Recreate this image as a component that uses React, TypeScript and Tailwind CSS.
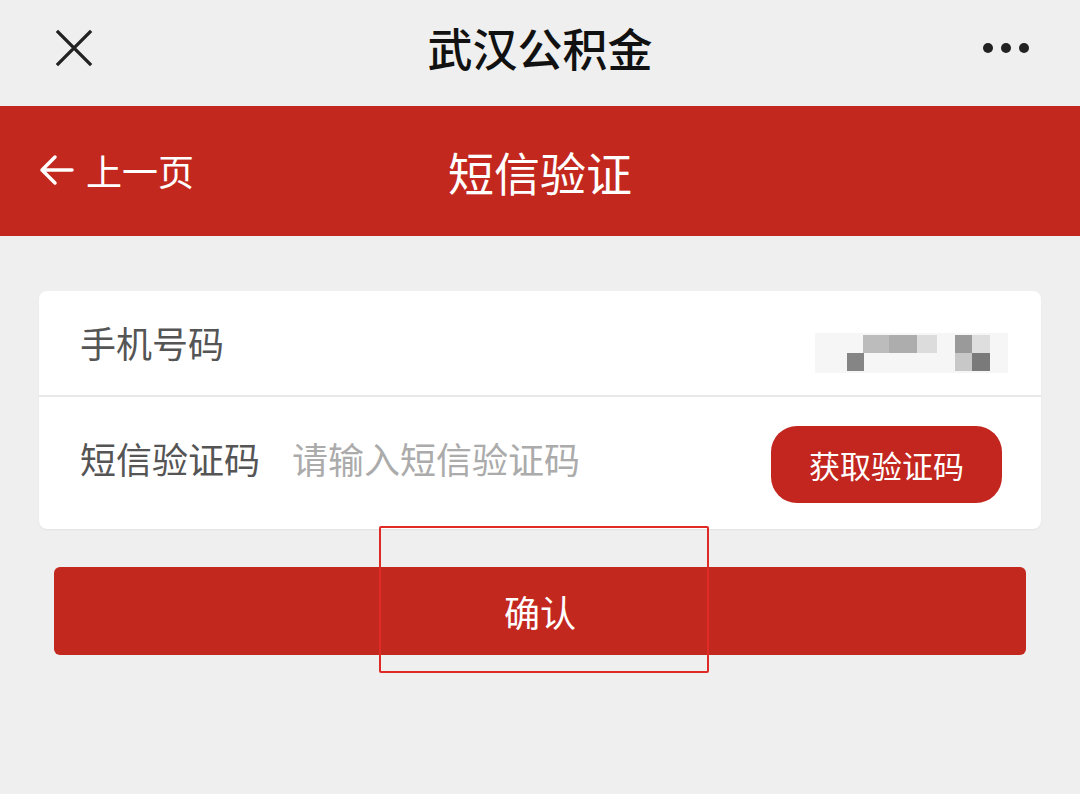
import React from "react";

export default function App() {
  return (
    <div
      className="relative w-[1080px] h-[794px] overflow-hidden bg-[#efefef]"
      style={{ fontFamily: '"Noto Sans CJK SC", "Noto Sans", sans-serif' }}
    >
      {/* top bar */}
      <div className="relative h-[106px] flex items-center justify-center">
        <svg width="38" height="38" viewBox="0 0 40 40" className="absolute left-[55px] top-[29px]">
          <path d="M2 2 L38 38 M38 2 L2 38" stroke="#222" strokeWidth="3.5" fill="none" />
        </svg>
        <div className="text-[45px] font-medium text-[#111] leading-none mb-[12px]">武汉公积金</div>
        <svg width="48" height="12" viewBox="0 0 48 12" className="absolute right-[50px] top-[42px]">
          <circle cx="6" cy="6" r="5" fill="#222" />
          <circle cx="24" cy="6" r="5" fill="#222" />
          <circle cx="42" cy="6" r="5" fill="#222" />
        </svg>
      </div>

      {/* red header */}
      <div className="relative h-[130px] bg-[#c3281f] flex items-center justify-center">
        <div className="absolute left-[38px] top-[46px] flex items-center gap-[12px] text-white">
          <svg width="36" height="32" viewBox="0 0 36 32">
            <path d="M17 3 L4 16 L17 29 M4 16 L34 16" stroke="#fff" strokeWidth="3.5" fill="none" strokeLinecap="round" strokeLinejoin="round" />
          </svg>
          <span className="text-[36px] leading-none">上一页</span>
        </div>
        <div className="text-white text-[46px] leading-none">短信验证</div>
      </div>

      {/* card */}
      <div className="mt-[55px] mx-[39px] bg-white rounded-[8px] shadow-[0_1px_2px_rgba(0,0,0,0.06)]">
        <div className="h-[106px] flex items-center justify-between pl-[41px] pr-[33px] border-b-2 border-[#e8e8e8]">
          <span className="text-[36px] text-[#555] leading-none mb-[2px]">手机号码</span>
          <svg width="193" height="40" viewBox="0 0 193 40" className="mt-[20px]">
            <rect x="0" y="0" width="193" height="40" fill="#f6f6f6" />
            <rect x="48" y="2" width="26" height="18" fill="#bcbcbc" />
            <rect x="74" y="2" width="28" height="18" fill="#adadad" />
            <rect x="102" y="2" width="20" height="18" fill="#dcdcdc" />
            <rect x="32" y="20" width="17" height="18" fill="#858585" />
            <rect x="140" y="2" width="17" height="18" fill="#9a9a9a" />
            <rect x="157" y="2" width="18" height="18" fill="#dedede" />
            <rect x="140" y="20" width="17" height="18" fill="#c8c8c8" />
            <rect x="157" y="20" width="18" height="18" fill="#7a7a7a" />
          </svg>
        </div>
        <div className="h-[132px] flex items-center pl-[41px] pr-[39px]">
          <span className="text-[36px] text-[#555] leading-none mb-[10px]">短信验证码</span>
          <span className="ml-[32px] text-[36px] text-[#ababab] leading-none flex-1 mb-[10px]">请输入短信验证码</span>
          <button className="w-[231px] h-[77px] rounded-[26px] bg-[#c3261f] text-white text-[31px] leading-none mt-[2px]">
            获取验证码
          </button>
        </div>
      </div>

      {/* confirm */}
      <div className="mt-[38px] mx-[54px]">
        <button className="w-full h-[88px] rounded-[6px] bg-[#c3281f] text-white text-[36px] leading-none">确认</button>
      </div>

      {/* annotation outline */}
      <div className="absolute left-[379px] top-[526px] w-[330px] h-[147px] border-2 border-[#e02a25] rounded-[2px]" />
    </div>
  );
}
